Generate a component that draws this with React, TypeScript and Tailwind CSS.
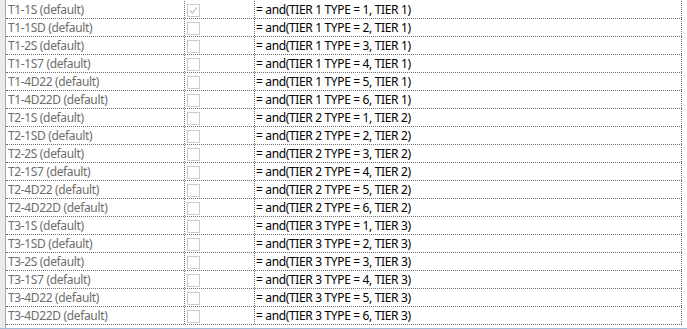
import React from "react";

const rows: [string, number, number][] = [];
const names = ["1S", "1SD", "2S", "1S7", "4D22", "4D22D"];
for (let t = 1; t <= 3; t++) {
  names.forEach((n, i) => rows.push([`T${t}-${n} (default)`, t, i + 1]));
}

function Check({ checked }: { checked: boolean }) {
  return (
    <div className="w-[13px] h-[13px] border border-[#cccccc] bg-white relative">
      {checked && (
        <svg width="11" height="11" viewBox="0 0 11 11" className="absolute left-0 top-0">
          <path d="M2 5.5 L4.5 8 L9 2.5" fill="none" stroke="#c4c4c4" strokeWidth="1.2" />
        </svg>
      )}
    </div>
  );
}

export default function App() {
  return (
    <div
      className="w-[687px] h-[329px] bg-white overflow-hidden flex flex-col"
      style={{ fontFamily: '"Noto Sans", "Open Sans", sans-serif' }}
    >
      <div className="flex flex-1">
        <div className="w-[6px] bg-[#ececec] border-r border-[#a8a8a8] shrink-0" />
        <div className="flex flex-col pt-[1px]">
          {rows.map(([name, t, n], idx) => (
            <div key={idx} className="flex h-[18px] border-b border-dotted border-[#6e6e6e]">
              <div className="w-[179px] border-r border-dotted border-[#6e6e6e] pl-[2px] text-[12px] leading-[17px] tracking-[-0.35px] text-[#6d6d6d] whitespace-nowrap">
                {name}
              </div>
              <div className="w-[70px] border-r border-dotted border-[#6e6e6e] pl-[2px] pt-[3px]">
                <Check checked={idx === 0} />
              </div>
              <div className="w-[427px] border-r border-dotted border-[#6e6e6e] pl-[1px] text-[12px] leading-[17px] tracking-[-0.35px] text-black whitespace-nowrap">
                {`= and(TIER ${t} TYPE = ${n}, TIER ${t})`}
              </div>
            </div>
          ))}
        </div>
      </div>
      <div className="h-[1px] bg-[#9dbad6] shrink-0" />
    </div>
  );
}
